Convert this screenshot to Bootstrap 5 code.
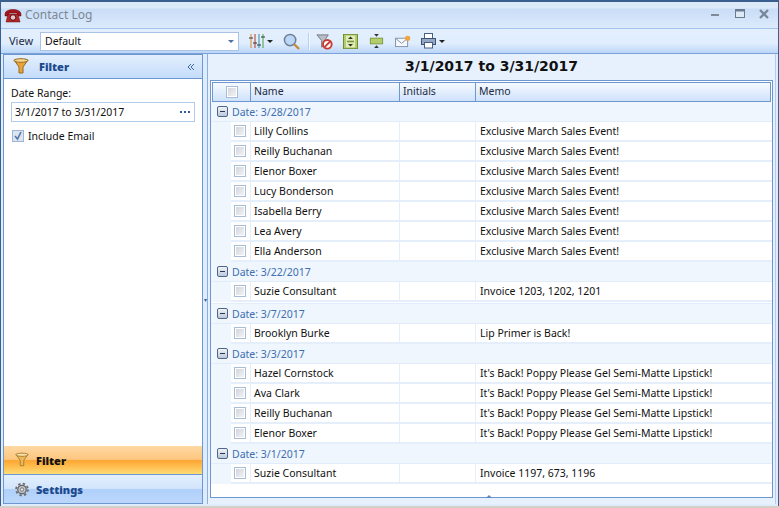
<!DOCTYPE html>
<html><head><meta charset="utf-8">
<link href="https://cdn.jsdelivr.net/npm/bootstrap@5.3.0/dist/css/bootstrap.min.css" rel="stylesheet">
<style>
html,body{margin:0;height:100%;overflow:hidden}
body{width:779px;height:508px;font:10.5px/1.2 "Noto Sans",sans-serif;color:#111;background:#d4d0c8}
.win{height:506px;background:#dfecfd;border:1px solid #3a5f8e;border-bottom:0;border-top-width:2px;box-sizing:border-box;}
.ttl{height:27px;background:linear-gradient(#dce9f9 0,#dce9f9 6px,#c9ddf7 7px,#dcebfc 100%);color:#7c8794;font-size:12px;padding:0 7px 0 3px;border-bottom:1px solid #a3c4ed}
.ttl span.t{margin-left:3px}
.tb{height:25px;background:linear-gradient(#e4effd,#dfedfd 60%,#bcd6f8);border-bottom:1px solid #7aa2d8;padding:0 0 0 4px}
.vw{width:30px;color:#1d2b44;font-size:11px}
.cmb{width:199px;height:19px;background:#fff;border:1px solid #a9c3e6;margin-left:5px;padding:0 4px;position:relative}
.cmb i{margin-left:auto;border:solid transparent;border-width:3px 3px 0;border-top-color:#4f6f9f}
.sep{width:1px;height:17px;background:#b7d0ef;box-shadow:1px 0 #f2f8ff}
.main{height:451px}
.lp{width:200px;margin-left:2px;border:1px solid #6c97d1;height:450px;background:#fff}
.lh{height:24px;background:linear-gradient(#e3effe,#c4dcfb);border-bottom:1px solid #6c97d1;color:#1c4a8e;font-weight:700;padding:0 7px 0 9px;font-size:11px}
.lh b{margin-left:10px;padding-top:1px}
.lbody{padding:8px 7px 7px}
.dr{height:20px;border:1px solid #b2cbe9;margin-top:2px;padding:1px 3px 0;color:#111}
.ck{width:12px;height:12px;border:1px solid #a8bcd6;box-shadow:inset 0 0 0 1px #fff;background:linear-gradient(135deg,#cfd2d8,#f5f6f8);flex:none;display:block}
.ck2{width:12px;height:12px;border:1px solid #9cb6d6;background:#dde4ee;flex:none;margin-right:4px}
.acc{height:29px;padding-left:11px;font-weight:700;color:#1c4a8e;font-size:11px}
.acc b{margin-left:7px;padding-top:1px}
.a1{background:linear-gradient(#fed9a3,#fdc67f 48%,#fda632 52%,#fedc75);color:#111;height:28px}
.a2{background:linear-gradient(#e3effe,#d3e5fc 48%,#b0d0fa 52%,#bcd7fb);border-top:1px solid #6c97d1}
.split{width:4px;color:#3a5f8e;font-size:6px;padding-top:243px;text-align:center}
.rp{width:569px;height:450px;background:#e7f1fe;border-left:1px solid #8bb0e0;border-right:1px solid #b4cdee}
.rt{height:25px;font:700 14px "DejaVu Sans",sans-serif;color:#111;text-align:center;line-height:24px}
.gridw{margin:1px 2px 0 2px;height:418px;border:1px solid #6c97d1;background:#fff;padding:1px 0 0;position:relative}
.gh{height:20px;margin-left:1px;border:1px solid #6c97d1;background:linear-gradient(#f6faff,#cfe2fb);width:559px;color:#1d2b44}
.gh>div{border-right:1px solid #6c97d1;height:100%;padding-left:3px;line-height:17px}
.c0{width:38px;flex:none}.c1{width:149px;flex:none}.c2{width:76px;flex:none}
.gh .c0{display:flex;justify-content:center;align-items:center;padding:0}
.gh .c3{border-right:0!important}
.grp{height:20px;background:#eff6fe;border-bottom:1px solid #e2edfb;color:#3d6eb0;padding-left:6px;gap:4px}
.grp span:last-child{padding-top:1px}
.mn{width:11px;height:11px;border:1px solid #4f668a;border-radius:2px;background:linear-gradient(#f0f3f8,#bcc8da);position:relative;flex:none}
.mn:after{content:"";position:absolute;left:2px;right:2px;top:4px;height:1px;background:#26374f}
.rw{height:20px;background:#eff6fe;padding-left:20px;color:#111}
.rw>div{background:#fff;height:100%;border-bottom:2px solid #e5effc;border-right:1px solid #e5effc;display:flex;align-items:center}
.rw .c0{width:20px;justify-content:center;padding-right:1px}
.rw .c1{padding-left:3px}
.rw .c3{flex:1;padding-left:4px;border-right:0}
.gapr{height:2px;background:#fff;border-bottom:1px solid #e2edfb}
.grip{position:absolute;left:275px;bottom:-1px;border:solid transparent;border-width:0 3px 3px;border-bottom-color:#5b86c2}
</style></head>
<body>
<div class="win d-flex flex-column">
 <div class="ttl d-flex align-items-center">
  <svg width="18" height="15" viewBox="0 0 18 15"><path d="M1 6C1 0 17 0 17 6V8H13V5H5V8H1Z" fill="#a3161c" stroke="#6b0d10" stroke-width=".5"/><path d="M4 6H14L16 14H2Z" fill="#b3262a" stroke="#6b0d10" stroke-width=".5"/><circle cx="9" cy="9.500" r="2.800" fill="#e9c4c4" stroke="#5d0d10"/></svg>
  <span class="t">Contact Log</span>
  <svg class="ms-auto" width="60" height="12" viewBox="0 0 60 12"><rect x="0" y="5" width="8" height="2" fill="#7f8a99"/><rect x="24.500" y=".5" width="9" height="8" fill="#dfe9f6" stroke="#6a7a90"/><rect x="24" y="0" width="10" height="2.500" fill="#6a7a90"/><path d="M49 1L57 9M57 1L49 9" stroke="#7a8798" stroke-width="2.400"/></svg>
 </div>
 <div class="tb d-flex align-items-center">
  <span class="vw ps-1">View</span>
  <div class="cmb d-flex align-items-center">Default<i></i></div>
  <svg width="16" height="16" viewBox="0 0 16 16" style="margin-left:10px"><path d="M2 1V15" stroke="#d28a25"/><path d="M6 1V15" stroke="#c0392b"/><path d="M10 1V15" stroke="#2f8f9f"/><path d="M14 1V15" stroke="#4f9c3a"/><path d="M0 5H4M4 10H8M8 12H12M12 4H16" stroke="#333"/></svg>
  <i style="border:solid transparent;border-width:3px 3px 0;border-top-color:#222;margin-left:2px"></i>
  <svg width="17" height="17" viewBox="0 0 18 18" style="margin-left:10px"><circle cx="7.500" cy="7.500" r="6" fill="#bcd7f5" stroke="#6e7f95" stroke-width="1.600"/><path d="M12 12L17 17" stroke="#c98a36" stroke-width="2.400"/></svg>
  <div class="sep" style="margin:0 7px 0 8px"></div>
  <svg width="17" height="17" viewBox="0 0 18 18"><path d="M1 2H13L9 8V13L6 15V8Z" fill="#b9bec6" stroke="#6f7680"/><circle cx="12" cy="12" r="4.600" fill="#fff" stroke="#c83b32" stroke-width="2"/><path d="M9 15L15 9" stroke="#c83b32" stroke-width="2"/></svg>
  <svg width="15" height="15" viewBox="0 0 15 18" preserveAspectRatio="none" style="margin-left:10px"><rect x=".5" y=".5" width="14" height="17" fill="#b5cc6c" stroke="#6f8f2d"/><rect x="3" y="2" width="9" height="14" fill="#e2ecc0"/><path d="M7.500 3L10 6H5ZM7.500 15L10 12H5Z" fill="#2c3a14"/><path d="M4 9H11" stroke="#7c9a38" stroke-width="2"/></svg>
  <svg width="15" height="16" viewBox="0 0 15 17" style="margin-left:11px"><rect x="1" y="5.500" width="13" height="6" fill="#b5cc6c" stroke="#7c9a38"/><path d="M7.500 4L5 1H10ZM7.500 13L5 16H10Z" fill="#333"/></svg>
  <svg width="16" height="13" viewBox="0 0 17 14" style="margin-left:11px"><rect x=".5" y="3.500" width="13" height="9" fill="#f5f8fd" stroke="#7d8ea8"/><path d="M1 4L7 9L13 4" fill="none" stroke="#7d8ea8"/><circle cx="13.500" cy="3.500" r="2.800" fill="#f2a33a"/></svg>
  <svg width="15" height="16" viewBox="0 0 15 16" style="margin-left:10px"><rect x="3.500" y=".5" width="8" height="6" fill="#fff" stroke="#4a5f80"/><rect x=".5" y="5.500" width="14" height="6" fill="#93a7c4" stroke="#3f5474"/><rect x="3.500" y="9.500" width="8" height="5.500" fill="#fff" stroke="#4a5f80"/></svg>
  <i style="border:solid transparent;border-width:3px 3px 0;border-top-color:#222;margin-left:3px"></i>
 </div>
 <div class="main d-flex">
  <div class="lp d-flex flex-column">
   <div class="lh d-flex align-items-center">
    <svg width="16" height="17" viewBox="0 0 16 17"><path d="M1 2H15L10 9V15H6V9Z" fill="#e7a43d" stroke="#9a6a1e"/><ellipse cx="8" cy="2.500" rx="7" ry="1.800" fill="#f6d893" stroke="#9a6a1e"/></svg>
    <b>Filter</b>
    <svg class="ms-auto" width="8" height="8" viewBox="0 0 8 8"><path d="M4 1L1 4L4 7M7 1L4 4L7 7" fill="none" stroke="#3f6aa6"/></svg>
   </div>
   <div class="lbody flex-grow-1">
    <div>Date Range:</div>
    <div class="dr d-flex align-items-center">3/1/2017 to 3/31/2017<svg class="ms-auto" width="12" height="3" viewBox="0 0 12 3"><path d="M1 0h2v2H1zM5 0h2v2H5zM9 0h2v2H9z" fill="#2f5c9c"/></svg></div>
    <div class="d-flex align-items-center" style="margin-top:8px;margin-left:1px"><span class="ck2 d-flex"><svg width="10" height="10" viewBox="0 0 10 10"><path d="M2 5L4.500 8L8 1" fill="none" stroke="#5277ad" stroke-width="1.600"/></svg></span>Include Email</div>
   </div>
   <div class="acc a1 d-flex align-items-center"><svg width="14" height="16" viewBox="0 0 16 17"><path d="M1 2H15L10 9V15H6V9Z" fill="#ecb95a" stroke="#a57a2a"/><ellipse cx="8" cy="2.500" rx="7" ry="1.800" fill="#f8e3ae" stroke="#a57a2a"/></svg><b>Filter</b></div>
   <div class="acc a2 d-flex align-items-center"><svg width="14" height="15" viewBox="0 0 15 15"><circle cx="7.500" cy="7.500" r="4.500" fill="#c4c8cd" stroke="#666" stroke-width="1.400"/><circle cx="7.500" cy="7.500" r="6.300" fill="none" stroke="#6e6e6e" stroke-width="2" stroke-dasharray="2.500 2.450"/><circle cx="7.500" cy="7.500" r="1.800" fill="#eef2f7" stroke="#666"/></svg><b>Settings</b></div>
  </div>
  <div class="split">&#9662;</div>
  <div class="rp">
   <div class="rt">3/1/2017 to 3/31/2017</div>
   <div class="gridw">
    <div class="gh d-flex">
     <div class="c0"><span class="ck"></span></div><div class="c1">Name</div><div class="c2">Initials</div><div class="c3 flex-grow-1">Memo</div>
    </div>
    <div class="grp d-flex align-items-center"><span class="mn"></span><span>Date: 3/28/2017</span></div>
    <div class="rw d-flex"><div class="c0"><span class="ck"></span></div><div class="c1">Lilly Collins</div><div class="c2"></div><div class="c3">Exclusive March Sales Event!</div></div>
    <div class="rw d-flex"><div class="c0"><span class="ck"></span></div><div class="c1">Reilly Buchanan</div><div class="c2"></div><div class="c3">Exclusive March Sales Event!</div></div>
    <div class="rw d-flex"><div class="c0"><span class="ck"></span></div><div class="c1">Elenor Boxer</div><div class="c2"></div><div class="c3">Exclusive March Sales Event!</div></div>
    <div class="rw d-flex"><div class="c0"><span class="ck"></span></div><div class="c1">Lucy Bonderson</div><div class="c2"></div><div class="c3">Exclusive March Sales Event!</div></div>
    <div class="rw d-flex"><div class="c0"><span class="ck"></span></div><div class="c1">Isabella Berry</div><div class="c2"></div><div class="c3">Exclusive March Sales Event!</div></div>
    <div class="rw d-flex"><div class="c0"><span class="ck"></span></div><div class="c1">Lea Avery</div><div class="c2"></div><div class="c3">Exclusive March Sales Event!</div></div>
    <div class="rw d-flex"><div class="c0"><span class="ck"></span></div><div class="c1">Ella Anderson</div><div class="c2"></div><div class="c3">Exclusive March Sales Event!</div></div>
    <div class="grp d-flex align-items-center"><span class="mn"></span><span>Date: 3/22/2017</span></div>
    <div class="rw d-flex"><div class="c0"><span class="ck"></span></div><div class="c1">Suzie Consultant</div><div class="c2"></div><div class="c3">Invoice 1203, 1202, 1201</div></div>
    <div class="gapr"></div>
    <div class="grp d-flex align-items-center"><span class="mn"></span><span>Date: 3/7/2017</span></div>
    <div class="rw d-flex"><div class="c0"><span class="ck"></span></div><div class="c1">Brooklyn Burke</div><div class="c2"></div><div class="c3">Lip Primer is Back!</div></div>
    <div class="grp d-flex align-items-center"><span class="mn"></span><span>Date: 3/3/2017</span></div>
    <div class="rw d-flex"><div class="c0"><span class="ck"></span></div><div class="c1">Hazel Cornstock</div><div class="c2"></div><div class="c3">It's Back! Poppy Please Gel Semi-Matte Lipstick!</div></div>
    <div class="rw d-flex"><div class="c0"><span class="ck"></span></div><div class="c1">Ava Clark</div><div class="c2"></div><div class="c3">It's Back! Poppy Please Gel Semi-Matte Lipstick!</div></div>
    <div class="rw d-flex"><div class="c0"><span class="ck"></span></div><div class="c1">Reilly Buchanan</div><div class="c2"></div><div class="c3">It's Back! Poppy Please Gel Semi-Matte Lipstick!</div></div>
    <div class="rw d-flex"><div class="c0"><span class="ck"></span></div><div class="c1">Elenor Boxer</div><div class="c2"></div><div class="c3">It's Back! Poppy Please Gel Semi-Matte Lipstick!</div></div>
    <div class="grp d-flex align-items-center"><span class="mn"></span><span>Date: 3/1/2017</span></div>
    <div class="rw d-flex"><div class="c0"><span class="ck"></span></div><div class="c1">Suzie Consultant</div><div class="c2"></div><div class="c3">Invoice 1197, 673, 1196</div></div>
    <span class="grip"></span>
   </div>
  </div>
 </div>
</div>
</body></html>
